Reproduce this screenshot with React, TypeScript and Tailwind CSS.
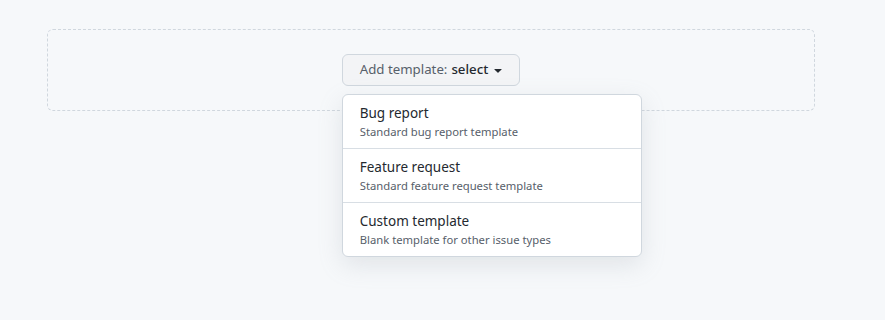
import React from "react";

const templates = [
  { title: "Bug report", description: "Standard bug report template" },
  { title: "Feature request", description: "Standard feature request template" },
  { title: "Custom template", description: "Blank template for other issue types" },
];

export default function App() {
  return (
    <div
      className="min-h-[320px] w-full bg-[#f6f8fa] pt-[29px] pl-[47px]"
      style={{ fontFamily: '"Noto Sans", "Liberation Sans", sans-serif' }}
    >
      <div className="w-[768px] rounded-md border border-dashed border-[#d0d7de] p-6 flex justify-center">
        <div className="relative">
          <button className="h-8 flex items-center gap-1 rounded-md border border-[#d0d7de] bg-[#f3f4f6] pl-[17px] pr-[13px] text-[13.25px] text-[#57606a]">
            <span>Add template:</span>
            <span className="font-medium text-[#24292f]">select</span>
            <svg width="16" height="16" viewBox="0 0 16 16" className="ml-[-2px]">
              <path d="M4.427 7.427l3.396 3.396a.25.25 0 00.354 0l3.396-3.396A.25.25 0 0011.396 7H4.604a.25.25 0 00-.177.427z" fill="#24292f" />
            </svg>
          </button>
          <div className="absolute left-0 top-10 w-[300px] rounded-md border border-[#d0d7de] bg-white shadow-[0_8px_24px_rgba(140,149,159,0.2)] z-10">
            {templates.map((t, i) => (
              <div
                key={t.title}
                className={
                  "pl-[17px] pr-4 py-2 " + (i < templates.length - 1 ? "border-b border-[#d8dee4]" : "")
                }
              >
                <div className="text-[13.5px] leading-5 text-[#24292f]">{t.title}</div>
                <div className="text-[11.25px] leading-[17px] text-[#57606a]">{t.description}</div>
              </div>
            ))}
          </div>
        </div>
      </div>
    </div>
  );
}
